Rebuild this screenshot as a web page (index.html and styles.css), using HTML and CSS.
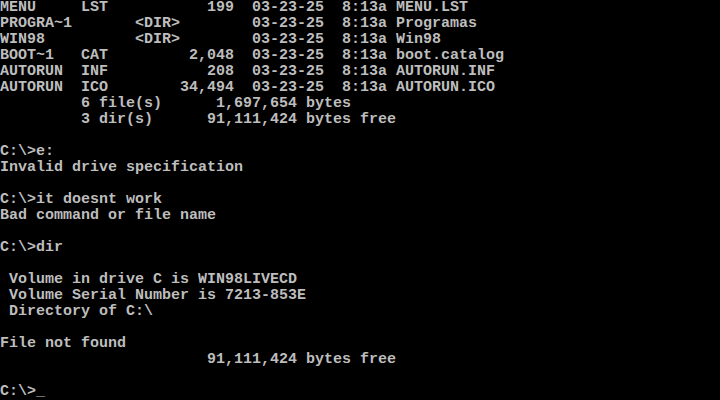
FILE: index.html
```html
<!DOCTYPE html>
<html>
<head>
<meta charset="utf-8">
<link rel="stylesheet" href="styles.css">
</head>
<body>
<pre class="screen">MENU     LST           199  03-23-25  8:13a MENU.LST
PROGRA~1       &lt;DIR&gt;        03-23-25  8:13a Programas
WIN98          &lt;DIR&gt;        03-23-25  8:13a Win98
BOOT~1   CAT         2,048  03-23-25  8:13a boot.catalog
AUTORUN  INF           208  03-23-25  8:13a AUTORUN.INF
AUTORUN  ICO        34,494  03-23-25  8:13a AUTORUN.ICO
         6 file(s)      1,697,654 bytes
         3 dir(s)      91,111,424 bytes free

C:\&gt;e:
Invalid drive specification

C:\&gt;it doesnt work
Bad command or file name

C:\&gt;dir

 Volume in drive C is WIN98LIVECD
 Volume Serial Number is 7213-853E
 Directory of C:\

File not found
                       91,111,424 bytes free

C:\&gt;_</pre>
</body>
</html>
```
FILE: styles.css
```css
html, body {
  margin: 0;
  padding: 0;
  background: #000;
  width: 720px;
  height: 400px;
  overflow: hidden;
}
.screen {
  margin: 0;
  padding: 0;
  font-family: "Liberation Mono", "DejaVu Sans Mono", monospace;
  font-size: 15px;
  line-height: 16px;
  font-weight: bold;
  color: #bdbdbd;
  white-space: pre;
}
```
